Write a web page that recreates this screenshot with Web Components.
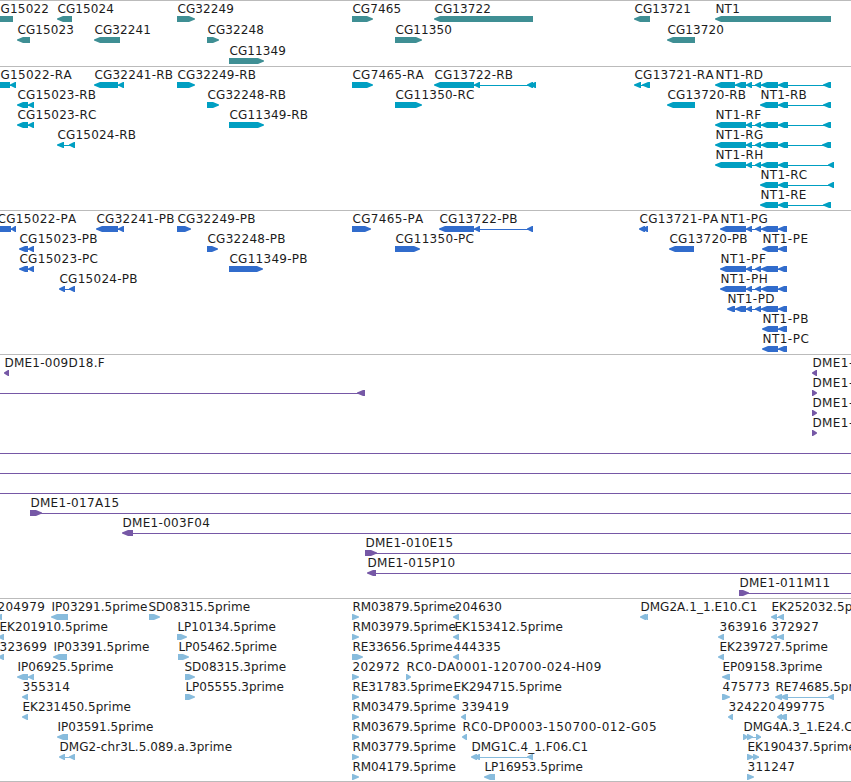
<!DOCTYPE html>
<html lang="en"><head><meta charset="utf-8"><title>Genome tracks</title>
<style>body{margin:0;background:#fff;overflow:hidden}</style></head><body>
<genome-browser>
<genome-track color="#3f8f94" style="--lane:21px;--gap:2px">
G15022,0,L-20-13; CG15024,57,L57-72; CG32249,177,R177-195; CG7465,352,R352-373; CG13722,434,L434-533; CG13721,634,L634-650; NT1,715,L715-831
CG15023,17,L17-30; CG32241,94,L94-120; CG32248,207,R207-219; CG11350,395,R395-422; CG13720,667,L667-695
CG11349,229,R229-264
</genome-track>
<genome-track color="#009fc2">
G15022-RA,0,L-20-10 L10-16; CG32241-RB,94,L94-118 L118-124; CG32249-RB,177,R177-195; CG7465-RA,352,R352-373; CG13722-RB,434,L434-474 L474-480 L527-533 L530-536; CG13721-RA,634,L634-641 L642-650; NT1-RD,715,L715-735 L735-746 L746-752 L755-761 L761-778 L778-788 L823-831
CG15023-RB,17,L17-28 L28-34; CG32248-RB,207,R207-219; CG11350-RC,395,R395-422; CG13720-RB,667,L667-695; NT1-RB,760,L760-778 L778-788 L823-831
CG15023-RC,17,L17-28 L28-34; CG11349-RB,229,R229-264; NT1-RF,715,L715-746 L746-752 L755-761 L761-778 L778-788 L823-831
CG15024-RB,57,L57-64 L69-75; NT1-RG,715,L715-746 L746-752 L755-761 L761-778 L778-788 L822-831
NT1-RH,715,L715-746 L746-752 L755-761 L761-778 L778-788 L828-834
NT1-RC,760,L760-778 L778-788 L828-834
NT1-RE,760,L760-778 L778-788 L823-831
</genome-track>
<genome-track color="#316ccc">
CG15022-PA,-3,L-20-11 L11-16; CG32241-PB,96,L96-118 L118-124; CG32249-PB,177,R177-191; CG7465-PA,352,R352-371; CG13722-PB,439,L439-474 L474-480 L527-533; CG13721-PA,639,L639-645 L642-648; NT1-PG,720,L720-746 L746-752 L755-761 L761-778 L778-787
CG15023-PB,19,L19-28 L28-34; CG32248-PB,207,R207-218; CG11350-PC,395,R395-420; CG13720-PB,669,L669-694; NT1-PE,762,L762-778 L778-787
CG15023-PC,19,L19-28 L28-34; CG11349-PB,229,R229-263; NT1-PF,720,L720-746 L746-752 L755-761 L761-778 L778-787
CG15024-PB,59,L59-65 L69-75; NT1-PH,720,L720-746 L746-752 L755-761 L761-778 L778-787
NT1-PD,727,L727-735 L735-746 L746-752 L755-761 L761-778 L778-787
NT1-PB,762,L762-778 L778-787
NT1-PC,762,L762-778 L778-787
</genome-track>
<genome-track color="#7658a6">
DME1-009D18.F,4,L4-9; DME1-,812,L812-817
,0,N0-357 L357-365; DME1-,812,R812-817
DME1-,812,R812-817
DME1-,812,R812-817
,0,N0-851
,0,N0-851
,0,N0-851
DME1-017A15,30,R30-42 N38-851
DME1-003F04,122,L122-133 N132-851
DME1-010E15,365,R365-377 N373-851
DME1-015P10,367,L367-376 N375-851
DME1-011M11,739,R739-749 N747-851
</genome-track>
<genome-track color="#88bcdd" style="--gap:2px">
204979,-3,L-4-2; IP03291.5prime,51,L51-68; SD08315.5prime,148,R149-160; RM03879.5prime,352,R352-359; 204630,454,L453-459; DMG2A.1_1.E10.C1,640,L640-646 L642-648; EK252032.5prime,771,L771-777 L778-784
EK201910.5prime,-1,L-2-4; LP10134.5prime,177,R177-187; RM03979.5prime,352,R352-359; EK153412.5prime,454,L453-459; 363916,719,L718-724; 372927,771,L771-777 L777-784
323699,-1,L-2-4; IP03391.5prime,53,L53-67; LP05462.5prime,178,R178-189; RE33656.5prime,352,R352-363; 444335,453,L453-459; EK239727.5prime,719,L718-724
IP06925.5prime,17,L17-28 L28-34; SD08315.3prime,184,R185-195; 202972,352,R352-359; RC0-DA0001-120700-024-H09,406,R406-411; EP09158.3prime,722,L722-730
355314,22,L22-28; LP05555.3prime,185,R185-195; RE31783.5prime,352,R352-359; EK294715.5prime,453,L453-459; 475773,722,R722-730; RE74685.5prime,775,L775-782 L780-788 L828-834
EK231450.5prime,22,L22-28; RM03479.5prime,352,R352-359; 339419,461,L461-466; 324220,728,L728-733; 499775,777,L777-782 L779-787
IP03591.5prime,57,L57-68; RM03679.5prime,352,R352-359; RC0-DP0003-150700-012-G05,462,L462-467; DMG4A.3_1.E24.C1,743,R743-748 R747-753 R756-761
DMG2-chr3L.5.089.a.3prime,59,L59-65 L69-75; RM03779.5prime,352,R352-359; DMG1C.4_1.F06.C1,471,L471-477 L474-480 L527-533; EK190437.5prime,747,R747-754 R753-759
RM04179.5prime,352,R352-359; LP16953.5prime,484,L484-495; 311247,747,R747-754
</genome-track>
</genome-browser>
<script>
const ADV={C:8,G:9,'-':6.6,R:7.8,B:7.6,A:8.2,D:8.8,M:10.3,E:7.2,F:7,K:8,L:5.7,P:7.4,I:3.3,S:7.5,N:9,T:7.5,H:9,'.':4,_:6,p:7.8,r:5,i:3.1,m:11,e:6.9,c:7,h:8,a:7};
const width=s=>[...s].reduce((n,c)=>n+(ADV[c]||7.92),0);

class GenomeLane extends HTMLElement{
  connectedCallback(){
    const root=this.attachShadow({mode:'open'});
    let shapes='',texts='';
    for(const item of this.dataset.features.split(';')){
      const [label,x,spec]=item.trim().split(',');
      const parts=spec.split(' ').map(p=>{const m=p.match(/^(\w)(-?\d+)-(\d+)$/);return [m[1],+m[2],+m[3]]});
      if(parts.length>1){
        const a=parts[0][1],b=parts[parts.length-1][2];
        shapes+=`<path d="M${a+2} 18H${b}v1H${a+2}z"/>`;
      }
      for(const [t,a,b] of parts) shapes+=this.shape(t,a,b);
      if(label) texts+=`<text x="${+x+0.4}" y="12" textLength="${width(label)}">${label}</text>`;
    }
    root.innerHTML=`<style>:host{display:block;height:var(--lane,20px)}svg{display:block;width:100%;height:100%;overflow:visible}
      text{font:12px "DejaVu Sans",sans-serif;fill:#1c1c1c;font-kerning:none}path{fill:var(--track)}</style>
      <svg>${shapes}${texts}</svg>`;
  }
  shape(t,a,b){
    if(t==='N') return `<path d="M${a} 18H${b}v1H${a}z"/>`;
    const short=b-a<8, w=short?b-a:7;
    return t==='L'
      ? `<path d="M${a} 17.5L${a+w-1} 15H${b}V21H${a+w-1}L${a} 18.5z"/>`
      : `<path d="M${b} 17.5L${b-w+1} 15H${a}V21H${b-w+1}L${b} 18.5z"/>`;
  }
}
class GenomeTrack extends HTMLElement{
  connectedCallback(){
    const root=this.attachShadow({mode:'open'});
    const lanes=this.textContent.trim().split('\n').map(l=>`<genome-lane data-features="${l.trim()}"></genome-lane>`).join('');
    root.innerHTML=`<style>:host{display:flex;flex-direction:column;border-top:1px solid #bbb;padding-bottom:var(--gap,3px);--track:${this.getAttribute('color')}}</style>${lanes}`;
  }
}
class GenomeBrowser extends HTMLElement{
  connectedCallback(){
    this.attachShadow({mode:'open'}).innerHTML=`<style>:host{display:flex;flex-direction:column;width:851px;height:782px;box-sizing:border-box;border-bottom:1px solid #bbb;overflow:hidden;background:#fff}</style><slot></slot>`;
  }
}
customElements.define('genome-lane',GenomeLane);
customElements.define('genome-track',GenomeTrack);
customElements.define('genome-browser',GenomeBrowser);
</script></body></html>
